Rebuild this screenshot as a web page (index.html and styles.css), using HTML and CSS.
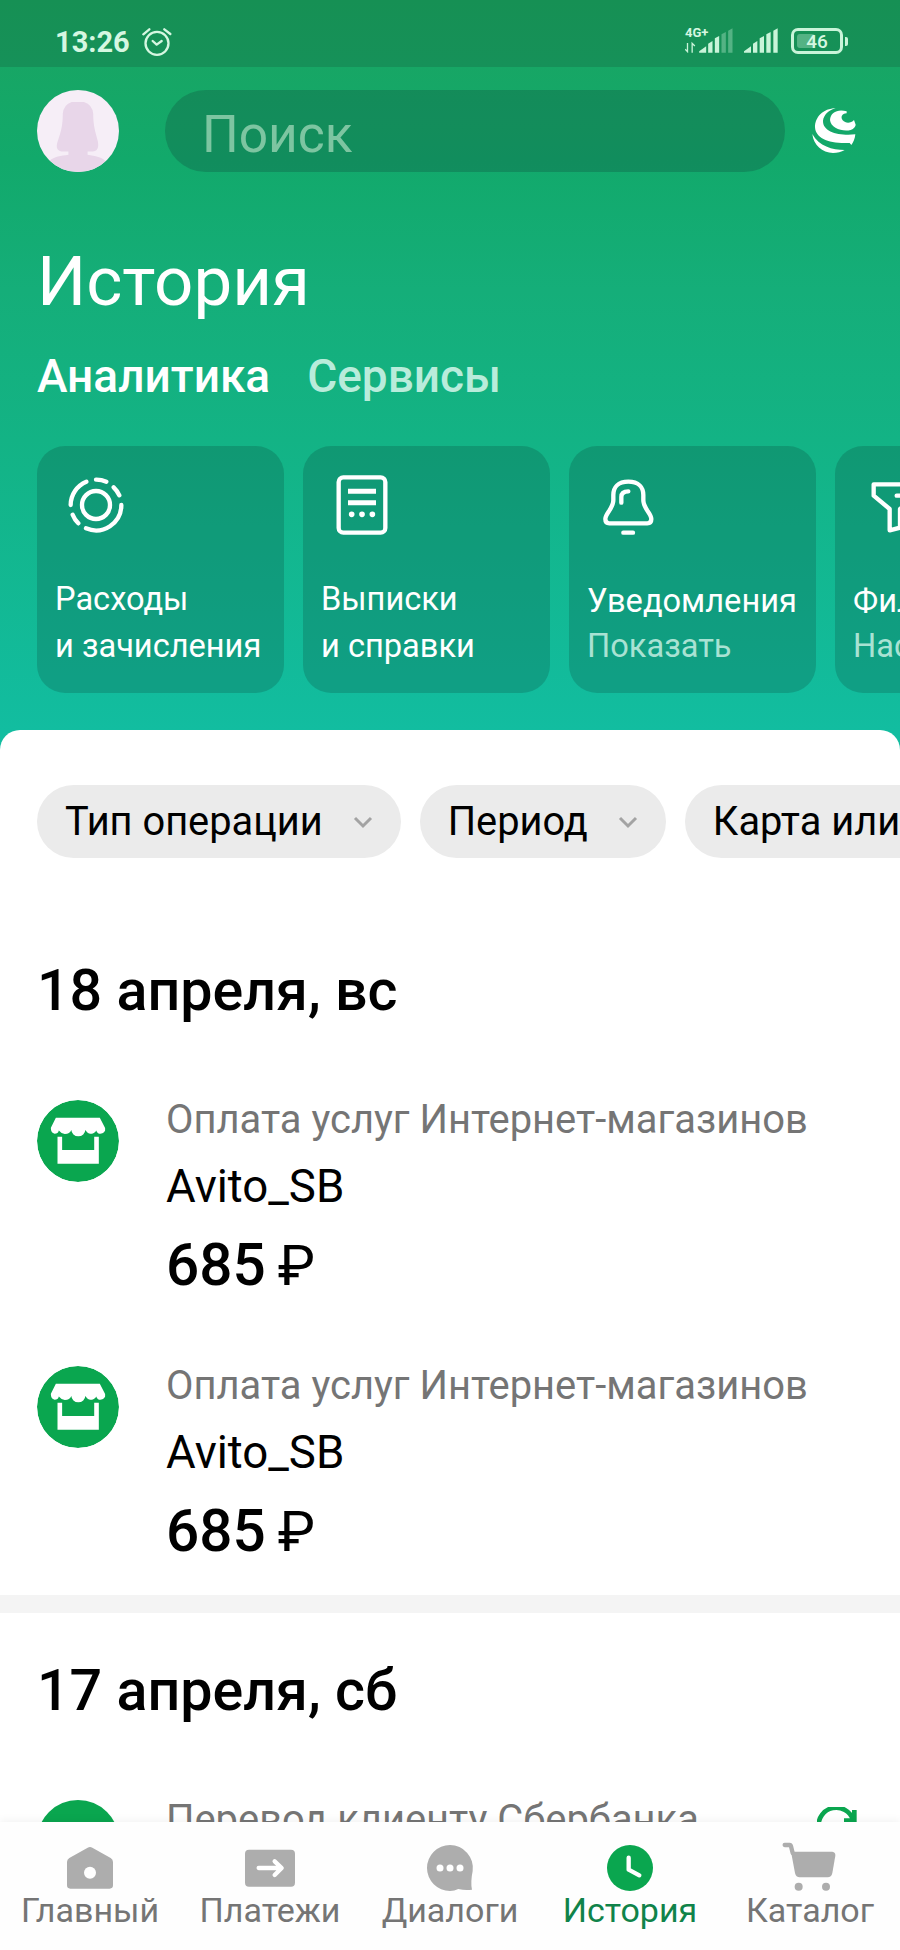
FILE: index.html
```
<!DOCTYPE html>
<html lang="ru">

<head>
    <meta charset="utf-8">
    <meta name="viewport" content="width=device-width, initial-scale=1.0">
    <title>История</title>
    <link rel="stylesheet" href="styles.css">
</head>

<body>
    <svg width="0" height="0" class="symbols">
        <symbol id="shop" viewBox="0 0 248 248">
            <circle cx="124" cy="124" r="124" fill="#0aa64f" />
            <path d="M57 54 H190 L206 85 V92 A16 16 0 0 1 186 101 Q181 98 179 92 A17 17 0 0 1 151 97 L146 91 A21 19 0 0 1 104 91 A21 19 0 0 1 84 103 Q74 102 66 92 Q64 102 53 102 Q43 100 42 88 V84Z" fill="#fff" />
            <path d="M62 111 H76 V151 H173 V111 H187 V193 H62Z" fill="#fff" />
        </symbol>
    </svg>

    <div class="screen">
        <header>
            <div class="status">
                <span class="time">13:26</span>
                <svg class="alarm" viewBox="0 0 90 88" fill="none" stroke="#d5f7e1" stroke-width="7" stroke-linecap="round" stroke-linejoin="round">
                    <circle cx="45" cy="48" r="34.5" />
                    <path d="M32 41 L44 52 L59 41" />
                    <path d="M4 21 L22 6 M67 6 L85 20" />
                </svg>
                <div class="network">
                    <span>4G+</span>
                    <svg viewBox="0 0 143 78" fill="#c9f4d9">
                        <path d="M42 77 V73 L63 58 V77Z M69 77 V50 L82 42 V77Z M89 77 V34 L102 27 V77Z" />
                        <path d="M109 77 V22 L122 15 V77Z M129 77 V11 L142 4 V77Z" opacity=".35" />
                        <path d="M7 48 V74 L0 67 M21 77 V49 L29 57" fill="none" stroke="#c9f4d9" stroke-width="4" />
                    </svg>
                </div>
                <svg class="signal" viewBox="0 0 102 78" fill="#c9f4d9">
                    <path d="M0 77 V73 L21 58 V77Z M27 77 V50 L40 42 V77Z M47 77 V34 L60 27 V77Z M67 77 V22 L80 15 V77Z M88 77 V11 L101 4 V77Z" />
                </svg>
                <div class="battery"><i></i><span>46</span></div>
            </div>

            <div class="topbar">
                <svg class="avatar" viewBox="0 0 248 248">
                    <clipPath id="face">
                        <circle cx="124" cy="124" r="124" />
                    </clipPath>
                    <g clip-path="url(#face)">
                        <path d="M0 0 H248 V248 H0Z" fill="#f6eef7" />
                        <path d="M105 36 H142 Q168 44 170 72 C170 108 176 124 184 155 C188 176 182 185 168 186 H153 V196 C176 199 198 204 208 216 V248 H38 V214 C52 202 72 199 95 196 V186 H74 C60 182 58 174 61 160 C74 124 78 104 78 72 Q80 44 105 36Z" fill="#e8d6e9" />
                    </g>
                </svg>
                <div class="search">Поиск</div>
                <svg class="logo" viewBox="0 0 130 135" fill="#fff">
                    <path d="M70 1 C32 1 8 28 8 58 C10 92 50 108 112 105 L117 111 C122 105 128 93 129 79 C80 84 31 72 32 38 C34 22 48 6 70 1Z" />
                    <path d="M103 10 C78 2 54 12 53 36 C55 60 90 72 115 66 C125 62 130 55 130 50 L125 36 C116 46 100 47 91 37 C84 28 88 16 103 16Z" />
                    <path d="M0 78 C3 110 30 135 62 135 C75 135 87 132 97 126 C60 126 20 115 0 78Z" />
                </svg>
            </div>

            <h1>История</h1>
            <nav class="tabs">
                <a class="valgt">Аналитика</a>
                <a>Сервисы</a>
            </nav>

            <section class="cards">
                <article>
                    <svg viewBox="0 0 180 180">
                        <path d="M14 90 A76 76 0 0 1 61 20 M90 14 A76 76 0 0 1 121 20 M143 37 A76 76 0 0 1 160 61 M166 90 A76 76 0 0 1 60 160 M37 145 A76 76 0 0 1 20 119" />
                        <circle cx="90" cy="90" r="42" />
                    </svg>
                    <p>Расходы<br>и зачисления</p>
                </article>
                <article>
                    <svg viewBox="0 0 180 180">
                        <rect x="20" y="7" width="140" height="166" rx="14" />
                        <path d="M48 49 H132 M48 83 H132" stroke-linecap="butt" stroke-width="15" />
                        <path d="M59 118 h.1 M90 118 h.1 M121 118 h.1" stroke-width="17" />
                    </svg>
                    <p>Выписки<br>и справки</p>
                </article>
                <article>
                    <svg viewBox="0 0 180 180">
                        <path d="M91 20 C60 20 46 37 46 60 V76 C46 100 22 116 22 132 C22 141 27 145 34 145 H148 C155 145 160 141 160 132 C160 116 136 100 136 76 V60 C136 37 122 20 91 20Z" />
                        <path d="M70 83 V66 Q70 49 91 49 M76 173 H105" />
                    </svg>
                    <p class="tight">Уведомления<br><span>Показать</span></p>
                </article>
                <article>
                    <svg viewBox="0 0 180 180">
                        <path d="M160 28 H29 V62 L77 102 V166 L108 158 V102 L160 62Z M98 62 H125" />
                    </svg>
                    <p class="tight">Фильтры<br><span>Настроить</span></p>
                </article>
            </section>
        </header>

        <main>
            <div class="filters">
                <button>Тип операции <svg viewBox="0 0 20 14"><path d="M2 3 L10 11 L18 3" /></svg></button>
                <button>Период <svg viewBox="0 0 20 14"><path d="M2 3 L10 11 L18 3" /></svg></button>
                <button>Карта или счёт <svg viewBox="0 0 20 14"><path d="M2 3 L10 11 L18 3" /></svg></button>
            </div>

            <section class="day">
                <h2>18 апреля, вс</h2>
                <article class="operation">
                    <svg class="round"><use href="#shop" /></svg>
                    <div>
                        <p class="type">Оплата услуг Интернет-магазинов</p>
                        <p class="name">Avito_SB</p>
                        <p class="sum">685<span>₽</span></p>
                    </div>
                </article>
                <article class="operation">
                    <svg class="round"><use href="#shop" /></svg>
                    <div>
                        <p class="type">Оплата услуг Интернет-магазинов</p>
                        <p class="name">Avito_SB</p>
                        <p class="sum">685<span>₽</span></p>
                    </div>
                </article>
            </section>

            <section class="day">
                <h2>17 апреля, сб</h2>
                <article class="operation">
                    <div class="round green"></div>
                    <div>
                        <p class="type">Перевод клиенту Сбербанка</p>
                    </div>
                    <svg class="repeat" viewBox="0 0 120 120" fill="none" stroke="#0aa64f" stroke-width="14">
                        <path d="M5 60 A53 53 0 0 1 108 38 M112 9 V41 H81" />
                    </svg>
                </article>
            </section>
        </main>

        <nav class="bottom">
            <a>
                <svg viewBox="0 0 150 150">
                    <path d="M68 14 Q75 10 82 14 L137 45 Q144 49 144 57 V127 Q144 137 134 137 H16 Q6 137 6 127 V57 Q6 49 13 45Z" fill="#adadad" />
                    <circle cx="75" cy="89" r="18" fill="#fff" />
                </svg>
                Главный
            </a>
            <a>
                <svg viewBox="0 0 150 150">
                    <rect y="20" width="150" height="111" rx="12" fill="#adadad" />
                    <path d="M41 75 H109 M89 55 L110 75 L89 96" fill="none" stroke="#fff" stroke-width="13" stroke-linecap="round" stroke-linejoin="round" />
                </svg>
                Платежи
            </a>
            <a>
                <svg viewBox="0 0 150 150">
                    <path d="M75 6 A69 69 0 1 0 75 144 Q88 144 100 138 Q120 143 141 140 Q136 118 143 84 A69 69 0 0 0 75 6Z" fill="#adadad" />
                    <path d="M45 75 h.1 M75 75 h.1 M105 75 h.1" stroke="#fff" stroke-width="21" stroke-linecap="round" />
                </svg>
                Диалоги
            </a>
            <a class="valgt">
                <svg viewBox="0 0 150 150">
                    <circle cx="75" cy="75" r="69" fill="#0aa64f" />
                    <path d="M71 44 V80 L103 97" fill="none" stroke="#fff" stroke-width="13" stroke-linecap="round" stroke-linejoin="round" />
                </svg>
                История
            </a>
            <a>
                <svg viewBox="0 0 150 150">
                    <path d="M-1 6 H14 Q17 6 18 10 L23 30" fill="none" stroke="#adadad" stroke-width="13" stroke-linecap="round" />
                    <path d="M18 26 H142 Q152 27 151 38 L142 90 Q139 103 128 103 H44 Q33 103 30 90Z" fill="#adadad" />
                    <circle cx="41" cy="131" r="12" fill="#adadad" />
                    <circle cx="123" cy="131" r="12" fill="#adadad" />
                </svg>
                Каталог
            </a>
        </nav>
    </div>
</body>

</html>
```
FILE: styles.css
```
* {
    box-sizing: border-box;
}

body {
    margin: 0;
    font-family: Roboto, sans-serif;
    background-color: #fff;
}

h1, h2, p {
    margin: 0;
    font-weight: 400;
}

svg {
    display: block;
    flex-shrink: 0;
}

.symbols {
    position: absolute;
}

.screen {
    display: flex;
    flex-direction: column;
    width: 900px;
    height: 1950px;
    overflow: hidden;
}

/* green part */

header {
    flex-shrink: 0;
    height: 750px;
    color: #fff;
    background: linear-gradient(#17a560 0, #17a665 67px, #12a96b 160px, #15ae79 290px, #13b385 440px, #12bda0 730px);
}

.status {
    display: flex;
    height: 67px;
    padding: 25px 49px 0 55px;
    background-color: rgba(16, 40, 30, 0.17);
    color: #d5f7e1;
}

.time {
    font-size: 29px;
    font-weight: 700;
    line-height: 34px;
    width: 87px;
}

.alarm {
    width: 30px;
    height: 30px;
    margin-top: 2px;
}

.network {
    width: 48px;
    margin-left: auto;
    position: relative;
}

.network span {
    position: absolute;
    top: 0;
    left: 0;
    font-size: 13px;
    font-weight: 700;
    line-height: 15px;
}

.network svg {
    width: 48px;
    height: 26px;
    margin-top: 2px;
}

.signal {
    width: 34px;
    height: 26px;
    margin: 2px 13px 0 11px;
}

.battery {
    position: relative;
    width: 52px;
    height: 26px;
    margin: 3px 8px 0 0;
    border: 3px solid #c9f4d9;
    border-radius: 7px;
    font-size: 19px;
    font-weight: 500;
    line-height: 21px;
    text-align: center;
}

.battery i {
    position: absolute;
    left: 3px;
    top: 3px;
    width: 18px;
    height: 14px;
    border-radius: 3px;
    background-color: rgba(201, 244, 217, 0.35);
}

.battery span {
    position: relative;
}

.battery::after {
    content: "";
    position: absolute;
    right: -8px;
    top: 6px;
    width: 3px;
    height: 9px;
    border-radius: 0 2px 2px 0;
    background-color: #c9f4d9;
}

.topbar {
    display: flex;
    align-items: center;
    padding: 22px 44px 0 37px;
}

.avatar {
    width: 82px;
    height: 82px;
}

.search {
    width: 620px;
    height: 82px;
    margin: 1px 27px 0 46px;
    padding: 5px 37px 0;
    border-radius: 41px;
    background-color: rgba(16, 60, 50, 0.25);
    color: #7dc5a1;
    font-size: 51.5px;
    line-height: 80px;
}

.logo {
    width: 44px;
    height: 45px;
}

h1 {
    padding: 70px 37px 0;
    font-size: 69px;
    line-height: 80px;
}

.tabs {
    display: flex;
    gap: 37px;
    padding: 27px 37px 0;
    font-size: 46px;
    font-weight: 500;
    line-height: 54px;
    color: #b9ecdb;
}

.tabs .valgt {
    color: #fff;
}

.cards {
    display: flex;
    gap: 19px;
    padding: 43px 37px 0;
    overflow: hidden;
}

.cards article {
    display: flex;
    flex-direction: column;
    justify-content: space-between;
    flex-shrink: 0;
    width: 247px;
    height: 247px;
    padding: 29px 0 23px 18px;
    border-radius: 28px;
    background-color: rgba(8, 60, 50, 0.22);
}

.cards svg {
    width: 60px;
    height: 60px;
    margin-left: 11px;
    fill: none;
    stroke: #fff;
    stroke-width: 13;
    stroke-linecap: round;
    stroke-linejoin: round;
}

.cards p {
    font-size: 32.6px;
    line-height: 47px;
    white-space: nowrap;
}

.cards .tight {
    padding-bottom: 1px;
    line-height: 45px;
}

.cards span {
    color: #a9e2d3;
}

/* operations */

main {
    flex: 1;
    margin-top: -20px;
    padding-top: 55px;
    overflow: hidden;
    background-color: #fff;
    border-radius: 20px 20px 0 0;
    color: #000;
}

.filters {
    display: flex;
    gap: 19px;
    padding: 0 37px;
    margin-bottom: 55px;
}

.filters button {
    display: flex;
    align-items: center;
    flex-shrink: 0;
    gap: 30px;
    height: 73px;
    padding: 0 28px;
    border: none;
    border-radius: 37px;
    background-color: #ebebeb;
    color: #000;
    font-family: Roboto, sans-serif;
    font-size: 39.8px;
    white-space: nowrap;
}

.filters svg {
    width: 20px;
    height: 14px;
    fill: none;
    stroke: #a3a3a3;
    stroke-width: 3;
}

.day {
    padding: 45px 37px 23px;
}

.day + .day {
    border-top: 18px solid #f4f4f4;
}

h2 {
    margin-bottom: 66px;
    font-size: 57.4px;
    font-weight: 500;
    line-height: 66px;
}

.operation {
    display: flex;
    gap: 47px;
}

.operation + .operation {
    margin-top: 50px;
}

.round {
    width: 82px;
    height: 82px;
    margin-top: 10px;
    border-radius: 50%;
}

.green {
    background-color: #0aa64f;
}

.type {
    font-size: 39.9px;
    line-height: 60px;
    color: #757575;
}

.name {
    font-size: 45.6px;
    line-height: 74px;
}

.sum {
    display: flex;
    align-items: baseline;
    height: 82px;
    font-size: 58.5px;
    font-weight: 500;
    line-height: 82px;
}

.sum span {
    margin-left: 12px;
    font-size: 56px;
    font-weight: 400;
}

.repeat {
    width: 40px;
    height: 40px;
    margin: 17px 6px 0 auto;
}

/* bottom menu */

.bottom {
    display: grid;
    grid-template-columns: repeat(5, 1fr);
    flex-shrink: 0;
    height: 128px;
    background-color: #fefefe;
    box-shadow: 0 -2px 8px rgba(0, 0, 0, 0.05);
    position: relative;
}

.bottom a {
    display: flex;
    flex-direction: column;
    align-items: center;
    padding-top: 21px;
    font-size: 34px;
    line-height: 34px;
    color: #757575;
}

.bottom svg {
    width: 50px;
    height: 50px;
    overflow: visible;
}

.bottom .valgt {
    color: #10834a;
}
```
